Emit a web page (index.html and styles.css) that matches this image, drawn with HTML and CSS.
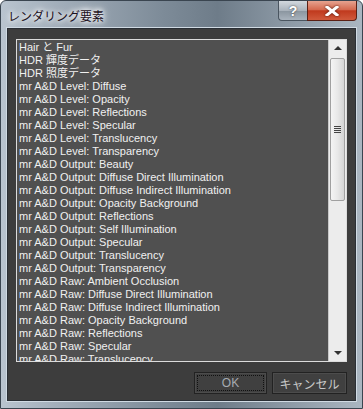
FILE: index.html
```html
<!DOCTYPE html>
<html lang="ja">
<head>
  <meta charset="UTF-8" />
  <title>レンダリング要素</title>
  <link rel="stylesheet" href="styles.css">
</head>
<body>

  <!-- ダイアログ -->
  <div class="window">
    <div class="titlebar">
      <span class="title">レンダリング要素</span>
      <div class="caption-buttons">
        <div class="cap-btn help">?</div>
        <div class="cap-btn close">
          <svg width="14" height="10" viewBox="0 0 14 10">
            <path d="M2 1 L12 9 M12 1 L2 9" stroke="#fff" stroke-width="3" stroke-linecap="square" />
          </svg>
        </div>
      </div>
    </div>

    <div class="client">
      <div class="listbox">
        <ul class="items">
          <li>Hair と Fur</li>
          <li>HDR 輝度データ</li>
          <li>HDR 照度データ</li>
          <li>mr A&amp;D Level: Diffuse</li>
          <li>mr A&amp;D Level: Opacity</li>
          <li>mr A&amp;D Level: Reflections</li>
          <li>mr A&amp;D Level: Specular</li>
          <li>mr A&amp;D Level: Translucency</li>
          <li>mr A&amp;D Level: Transparency</li>
          <li>mr A&amp;D Output: Beauty</li>
          <li>mr A&amp;D Output: Diffuse Direct Illumination</li>
          <li>mr A&amp;D Output: Diffuse Indirect Illumination</li>
          <li>mr A&amp;D Output: Opacity Background</li>
          <li>mr A&amp;D Output: Reflections</li>
          <li>mr A&amp;D Output: Self Illumination</li>
          <li>mr A&amp;D Output: Specular</li>
          <li>mr A&amp;D Output: Translucency</li>
          <li>mr A&amp;D Output: Transparency</li>
          <li>mr A&amp;D Raw: Ambient Occlusion</li>
          <li>mr A&amp;D Raw: Diffuse Direct Illumination</li>
          <li>mr A&amp;D Raw: Diffuse Indirect Illumination</li>
          <li>mr A&amp;D Raw: Opacity Background</li>
          <li>mr A&amp;D Raw: Reflections</li>
          <li>mr A&amp;D Raw: Specular</li>
          <li>mr A&amp;D Raw: Translucency</li>
        </ul>

        <!-- スクロールバー -->
        <div class="scrollbar">
          <div class="arrow up"></div>
          <div class="track">
            <div class="thumb"><span class="grip"></span></div>
          </div>
          <div class="arrow down"></div>
        </div>
      </div>

      <div class="buttons">
        <button class="btn ok"><span class="focus">OK</span></button>
        <button class="btn">キャンセル</button>
      </div>
    </div>
  </div>

</body>
</html>
```

FILE: styles.css
```css
/* 全体 */
body {
  margin: 0;
  padding: 0;
  background: #fff;
  font-family: 'Liberation Sans', 'Noto Sans CJK JP', sans-serif;
}

.window {
  width: 363px;
  height: 409px;
  box-sizing: border-box;
  border: 1px solid #3a4550;
  border-radius: 6px 6px 0 0;
  background: linear-gradient(90deg, #b9c4cf 0%, #a3afbb 15%, #7d8b98 45%, #6e7c89 60%, #8d9aa6 80%, #aab6c1 100%);
  display: flex;
  flex-direction: column;
  overflow: hidden;
}

/* タイトルバー */
.titlebar {
  height: 27px;
  display: flex;
  justify-content: space-between;
  align-items: flex-start;
  padding-left: 7px;
  padding-right: 5px;
}

.title {
  margin-top: 6px;
  font-size: 12px;
  color: #1c1020;
  text-shadow: 0 0 6px #fff, 0 0 10px #fff, 0 0 4px #e8eef4;
}

.caption-buttons {
  display: flex;
}

.cap-btn {
  height: 19px;
  border: 1px solid #4a5560;
  border-top: none;
  display: flex;
  justify-content: center;
  align-items: center;
  color: #fff;
  font-weight: bold;
  font-size: 14px;
}

.help {
  width: 28px;
  border-radius: 0 0 0 4px;
  border-right: none;
  background: linear-gradient(#d2d8de 0%, #aab3bc 50%, #8a959f 52%, #a9b3bd 100%);
  text-shadow: 0 0 2px #333;
}

.close {
  width: 48px;
  border-radius: 0 0 4px 0;
  background: linear-gradient(#e6a390 0%, #d56a50 45%, #c03a1e 52%, #d05a3c 100%);
  border-color: #5a2015;
}

.close svg {
  filter: drop-shadow(0 0 1px #4a1208);
}

/* クライアント領域 */
.client {
  flex: 1;
  margin: 0 6px 7px 6px;
  background: #3d3d3d;
  border: 1px solid #2a2f35;
  box-shadow: 0 0 0 1px #d0dae3;
  padding: 10px 8px 6px 8px;
  display: flex;
  flex-direction: column;
}

.listbox {
  height: 323px;
  box-sizing: border-box;
  border: 1px solid #dcdcdc;
  background: #505050;
  display: flex;
  overflow: hidden;
}

.items {
  flex: 1;
  list-style: none;
  margin: 0;
  padding: 1px 0 0 2px;
  overflow: hidden;
}

.items li {
  font-size: 11px;
  line-height: 13px;
  height: 13px;
  color: #f0f0f0;
  white-space: nowrap;
}

/* スクロールバー */
.scrollbar {
  width: 17px;
  background: #ececec;
  display: flex;
  flex-direction: column;
  border-left: 1px solid #c8c8c8;
}

.arrow {
  height: 17px;
  position: relative;
}

.arrow::after {
  content: '';
  position: absolute;
  left: 5px;
  width: 0;
  height: 0;
  border-left: 4px solid transparent;
  border-right: 4px solid transparent;
}

.arrow.up::after {
  top: 6px;
  border-bottom: 4px solid #333;
}

.arrow.down::after {
  top: 7px;
  border-top: 4px solid #333;
}

.track {
  flex: 1;
}

.thumb {
  height: 143px;
  margin: 1px 1px 0 1px;
  box-sizing: border-box;
  border: 1px solid #a0a0a0;
  border-radius: 2px;
  background: linear-gradient(90deg, #f4f4f4 0%, #e8e8e8 50%, #d4d4d4 100%);
  display: flex;
  justify-content: center;
  align-items: center;
}

.grip {
  width: 7px;
  height: 7px;
  background: repeating-linear-gradient(#444 0 1px, transparent 1px 2px);
}

/* ボタン */
.buttons {
  display: flex;
  justify-content: flex-end;
  gap: 5px;
  margin-top: 10px;
}

.btn {
  height: 22px;
  width: 75px;
  box-sizing: border-box;
  background: #404040;
  border: 1px solid #222;
  box-shadow: inset 0 0 0 1px #4c4c4c;
  color: #c8c8c8;
  font-family: 'Liberation Sans', 'Noto Sans CJK JP', sans-serif;
  font-size: 12px;
  padding: 0;
}

.btn.ok {
  width: 73px;
  padding: 2px;
  color: #a6aab0;
}

.btn.ok .focus {
  display: flex;
  justify-content: center;
  align-items: center;
  height: 100%;
  box-sizing: border-box;
  border: 1px dotted #111;
}
```
